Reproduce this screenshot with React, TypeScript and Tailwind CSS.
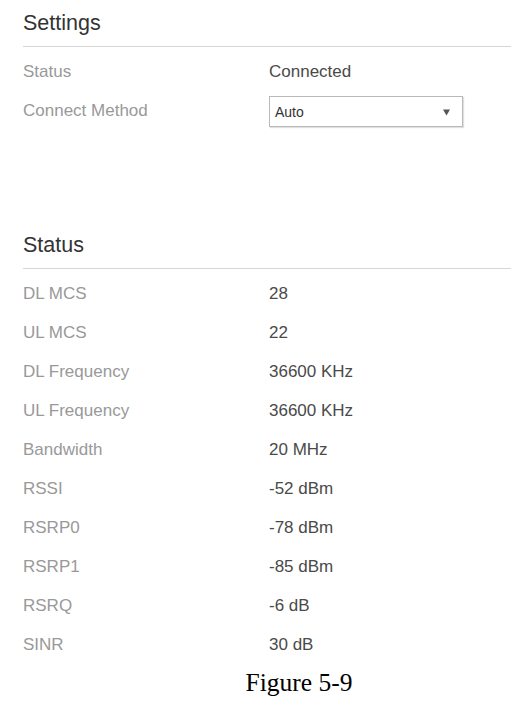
const settingsRows = [{ label: 'Status', value: 'Connected' }];

const statusRows = [
  { label: 'DL MCS', value: '28' },
  { label: 'UL MCS', value: '22' },
  { label: 'DL Frequency', value: '36600 KHz' },
  { label: 'UL Frequency', value: '36600 KHz' },
  { label: 'Bandwidth', value: '20 MHz' },
  { label: 'RSSI', value: '-52 dBm' },
  { label: 'RSRP0', value: '-78 dBm' },
  { label: 'RSRP1', value: '-85 dBm' },
  { label: 'RSRQ', value: '-6 dB' },
  { label: 'SINR', value: '30 dB' },
];

function SectionHeading({ title }: { title: string }) {
  return (
    <h2 className="border-b border-[#d6d6d6] pt-[8px] pb-[8px] text-[21.5px] leading-[30px] font-normal text-[#333]">
      {title}
    </h2>
  );
}

function Row({ label, children }: { label: string; children: React.ReactNode }) {
  return (
    <div className="flex h-[39px] items-center text-[17px] leading-[39px]">
      <span className="w-[246px] text-[#999]">{label}</span>
      <span className="text-[#4a4a4a]">{children}</span>
    </div>
  );
}

export default function App() {
  return (
    <div className="h-[704px] w-[511px] overflow-hidden bg-white font-['Liberation_Sans',Arial,sans-serif]">
      <section className="ml-[23px]">
        <SectionHeading title="Settings" />
        <div className="mt-[5px]">
          {settingsRows.map((r) => (
            <Row key={r.label} label={r.label}>
              {r.value}
            </Row>
          ))}
          <Row label="Connect Method">
            <span className="mt-[2px] flex h-[31px] w-[194px] items-center justify-between border border-[#b9b9b9] bg-white pr-[12px] pl-[5px] text-[14px] leading-none text-[#333] shadow-[1px_1px_1px_rgba(0,0,0,0.12)]">
              Auto
              <svg width="7" height="7" viewBox="0 0 7 7" className="mt-[1px]">
                <polygon points="0,0.5 7,0.5 3.5,6.5" fill="#555" />
              </svg>
            </span>
          </Row>
        </div>
      </section>

      <section className="mt-[92px] ml-[23px]">
        <SectionHeading title="Status" />
        <div className="mt-[5px]">
          {statusRows.map((r) => (
            <Row key={r.label} label={r.label}>
              {r.value}
            </Row>
          ))}
        </div>
      </section>

      <p className="mt-[4px] pl-[87px] text-center font-['Liberation_Serif','Times_New_Roman',serif] text-[25.5px] leading-[30px] text-black">
        Figure 5-9
      </p>
    </div>
  );
}
